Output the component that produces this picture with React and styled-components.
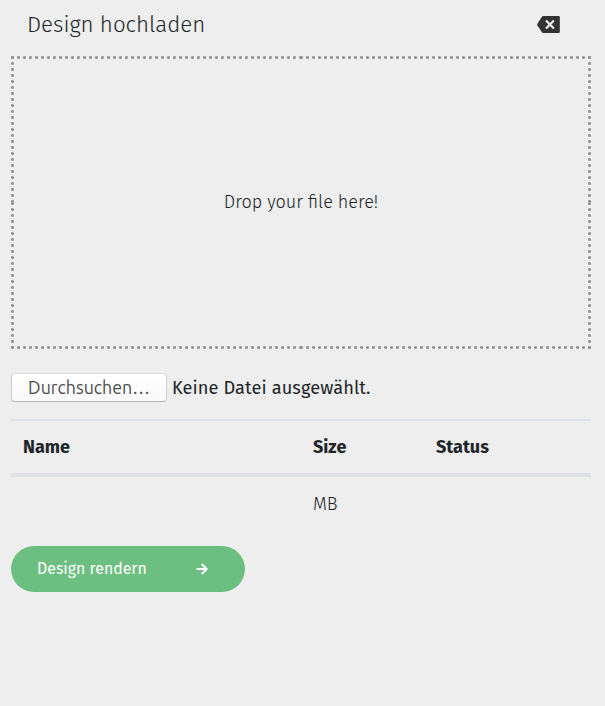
import React from "react";
import styled, { createGlobalStyle } from "styled-components";

const GlobalStyle = createGlobalStyle`
  *, *::before, *::after { box-sizing: border-box; }
  body {
    margin: 0;
    background: #eeeeee;
    color: #212529;
    font-family: "Fira Sans", "Noto Sans", "Open Sans", sans-serif;
    font-size: 18px;
    font-weight: 300;
    line-height: 27px;
  }
`;

const Panel = styled.main`
  display: flex;
  flex-direction: column;
  align-items: flex-start;
  width: 605px;
  height: 706px;
  padding: 0 14px 0 11px;
`;

const Header = styled.header`
  display: flex;
  align-items: center;
  justify-content: space-between;
  width: 100%;
  height: 56px;
  padding: 0 31px 7px 16px;
`;

const Title = styled.h1`
  margin: 0;
  font-size: 22.3px;
  font-weight: 300;
  line-height: 32px;
`;

const CloseButton = styled.button`
  display: flex;
  padding: 0;
  border: 0;
  background: none;
  color: #333333;
`;

const DropZone = styled.div`
  position: relative;
  display: flex;
  align-items: center;
  justify-content: center;
  width: 100%;
  height: 293px;
`;

const DottedFrame = styled.div`
  position: absolute;
  inset: 0;
  display: grid;
  grid-template: 147px 146px / 290px 290px;
  pointer-events: none;
`;

/* Each quarter starts its dots at its own outer corner, so all corners stay clean. */
const FrameCorner = styled.span`
  --dot-x: ${(p) => (p.$right ? "4.5px" : "1.5px")};
  --dot-y: ${(p) => (p.$bottom ? "4.5px" : "1.5px")};
  background:
    radial-gradient(circle at var(--dot-x) 1.5px, #949494 1.2px, transparent 1.8px)
      ${(p) => (p.$right ? "right" : "left")} ${(p) => (p.$bottom ? "bottom" : "top")} / 6px 3px repeat-x,
    radial-gradient(circle at 1.5px var(--dot-y), #949494 1.2px, transparent 1.8px)
      ${(p) => (p.$right ? "right" : "left")} ${(p) => (p.$bottom ? "bottom" : "top")} / 3px 6px repeat-y;
`;

const FileRow = styled.div`
  display: flex;
  align-items: center;
  gap: 5px;
  height: 29px;
  margin-top: 24px;
  font-weight: 400;
`;

const FileStatus = styled.span`
  padding-top: 1px;
  font-size: 18.2px;
  letter-spacing: 0.1px;
`;

const BrowseButton = styled.button`
  width: 156px;
  height: 29px;
  padding: 0;
  border: 1px solid #cdcdcd;
  border-top-color: #dcdcdc;
  border-bottom-color: #b2b2b2;
  border-radius: 4px;
  background: linear-gradient(#ffffff, #fafafa);
  color: #4c4c4c;
  font: 400 17.8px/25px "Ubuntu", "Noto Sans", sans-serif;
`;

const Table = styled.div`
  width: 100%;
  margin-top: 17px;
  border-top: 2px solid #dee2e6;
`;

const Row = styled.div`
  display: grid;
  grid-template-columns: 290px 123px 1fr;
  height: ${(p) => (p.$head ? "56px" : "54px")};
  align-items: center;
  border-bottom: ${(p) => (p.$head ? "4px solid #dee2e6" : "0")};
  font-weight: ${(p) => (p.$head ? 700 : 300)};
`;

const Cell = styled.div`
  padding: 0 12px;
`;

const RenderButton = styled.button`
  display: flex;
  align-items: center;
  justify-content: space-between;
  width: 234px;
  height: 46px;
  margin-top: 15px;
  padding: 0 37px 0 26px;
  border: 0;
  border-radius: 23px;
  background: #6dbf81;
  color: #ffffff;
  font: 400 15.9px/24px "Fira Sans", "Noto Sans", sans-serif;
`;

const BackspaceIcon = () => (
  <svg width="23" height="17" viewBox="0 0 23 17" aria-hidden="true">
    <path
      d="M6.2 0H21.7Q22.8 0 22.8 1.2V15.8Q22.8 17 21.7 17H6.2Q5.4 17 4.9 16.3L.4 9.3Q0 8.5.4 7.7L4.9.7Q5.4 0 6.2 0Z"
      fill="currentColor"
    />
    <path d="M9 4.4 16.9 12.5M16.9 4.4 9 12.5" stroke="#eeeeee" strokeWidth="2.2" />
  </svg>
);

const ArrowIcon = () => (
  <svg width="12" height="12" viewBox="0 0 12 12" fill="none" aria-hidden="true">
    <path d="M.5 6H10.5M5.7 1 10.7 6 5.7 11" stroke="currentColor" strokeWidth="2" />
  </svg>
);

export default function App() {
  return (
    <>
      <GlobalStyle />
      <Panel>
        <Header>
          <Title>Design hochladen</Title>
          <CloseButton aria-label="Close">
            <BackspaceIcon />
          </CloseButton>
        </Header>
        <DropZone>
          <DottedFrame>
            <FrameCorner />
            <FrameCorner $right />
            <FrameCorner $bottom />
            <FrameCorner $right $bottom />
          </DottedFrame>
          <span>Drop your file here!</span>
        </DropZone>
        <FileRow>
          <BrowseButton>Durchsuchen…</BrowseButton>
          <FileStatus>Keine Datei ausgewählt.</FileStatus>
        </FileRow>
        <Table>
          <Row $head>
            <Cell>Name</Cell>
            <Cell>Size</Cell>
            <Cell>Status</Cell>
          </Row>
          <Row>
            <Cell />
            <Cell>MB</Cell>
            <Cell />
          </Row>
        </Table>
        <RenderButton>
          <span>Design rendern</span>
          <ArrowIcon />
        </RenderButton>
      </Panel>
    </>
  );
}
